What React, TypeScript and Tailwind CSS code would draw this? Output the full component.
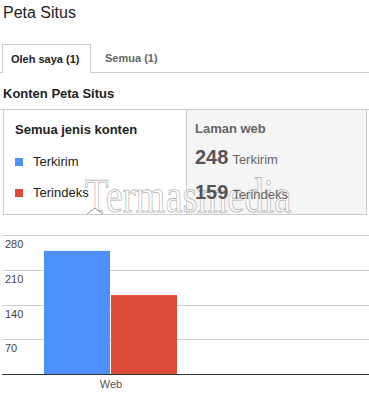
import * as React from 'react';

const FONT = "font-['Liberation_Sans',Arial,sans-serif]";

const GRID = [
  { y: 5.5, label: '280', ly: 18 },
  { y: 40.5, label: '210', ly: 53 },
  { y: 75.5, label: '140', ly: 88 },
  { y: 109.5, label: '70', ly: 122 },
];

function Chart() {
  // 0 sits on the baseline (y=144), 280 on the top line
  const base = 144;
  const scale = 139 / 280;
  const bars = [
    { x: 44, value: 248, color: '#4d90fe' },
    { x: 111, value: 159, color: '#dd4b39' },
  ];
  return (
    <svg width={369} height={163} className="block">
      {GRID.map((g) => (
        <line key={g.label} x1={2} x2={369} y1={g.y} y2={g.y} stroke="#cccccc" strokeWidth={1} />
      ))}
      {bars.map((b) => (
        <rect key={b.x} x={b.x} y={base - b.value * scale} width={66} height={b.value * scale} fill={b.color} />
      ))}
      <line x1={2} x2={369} y1={144.5} y2={144.5} stroke="#333333" strokeWidth={1} />
      {GRID.map((g) => (
        <text
          key={g.label + 't'}
          x={5}
          y={g.ly}
          fontSize={11}
          fill="#444444"
          fontFamily="'Liberation Sans', Arial, sans-serif"
        >
          {g.label}
        </text>
      ))}
      <text x={111} y={158} fontSize={11} fill="#555555" textAnchor="middle" fontFamily="'Liberation Sans', Arial, sans-serif">
        Web
      </text>
    </svg>
  );
}

export default function App() {
  return (
    <div className={`relative h-[393px] w-[369px] overflow-hidden bg-white ${FONT}`}>
      {/* page title */}
      <div className="px-[3px] pt-[3px] text-[16px] leading-[20px] text-[#222]">Peta Situs</div>

      {/* tabs */}
      <div className="mt-[21px] flex h-[29px] border-b border-[#ccc]">
        <div className="-mb-px ml-[2px] flex h-[29px] w-[89px] items-center border border-b-0 border-[#ccc] bg-white pl-[8px] text-[11px] font-bold text-[#222]">
          Oleh saya (1)
        </div>
        <div className="ml-[14px] flex items-center text-[11px] font-bold text-[#666]">Semua (1)</div>
      </div>

      {/* section header */}
      <div className="h-[37px] border-b border-[#ccc] px-[3px] pt-[13px] text-[13px] font-bold leading-[16px] text-[#222]">
        Konten Peta Situs
      </div>

      {/* summary box */}
      <div className="ml-[3px] flex h-[105px] w-[364px] border-x border-b border-[#ccc]">
        <div className="w-[182px] bg-white pl-[11px] pt-[12px]">
          <div className="text-[13px] font-bold leading-[16px] text-[#222]">Semua jenis konten</div>
          <div className="relative z-[2] mt-[16px] flex items-center gap-[10px] text-[13px] leading-[16px] text-[#222]">
            <span className="h-[8px] w-[8px] bg-[#4d90fe]" />
            Terkirim
          </div>
          <div className="relative z-[2] mt-[15px] flex items-center gap-[10px] text-[13px] leading-[16px] text-[#222]">
            <span className="h-[8px] w-[8px] bg-[#dd4b39]" />
            Terindeks
          </div>
        </div>
        <div className="flex-1 border-l border-[#ccc] bg-[#f5f5f5] pl-[8px] pt-[11px] text-[#666]">
          <div className="text-[13px] font-bold leading-[16px]">Laman web</div>
          <div className="relative z-[2] mt-[8px] flex items-baseline gap-[4px]">
            <span className="text-[20px] font-bold leading-[24px] text-[#555]">248</span>
            <span className="text-[13px]">Terkirim</span>
          </div>
          <div className="relative z-[2] mt-[10px] flex items-baseline gap-[4px]">
            <span className="text-[20px] font-bold leading-[24px] text-[#555]">159</span>
            <span className="text-[13px]">Terindeks</span>
          </div>
        </div>
      </div>

      {/* chart */}
      <div className="mt-[15px]">
        <Chart />
      </div>

      {/* watermark, sits behind the box texts */}
      <div className="pointer-events-none absolute left-[85px] top-[168px] z-[1] origin-left scale-x-[0.8] font-['Liberation_Serif','Times_New_Roman',serif] text-[48px] leading-[56px] text-white/70 [-webkit-text-stroke:0.75px_#b0b0b0]">
        Termasmedia
      </div>
      <svg className="pointer-events-none absolute left-[86px] top-[203px] z-[1]" width={18} height={12}>
        <polyline points="1,11 9,5 17,11" fill="white" stroke="#999" strokeWidth={1} />
      </svg>
    </div>
  );
}
